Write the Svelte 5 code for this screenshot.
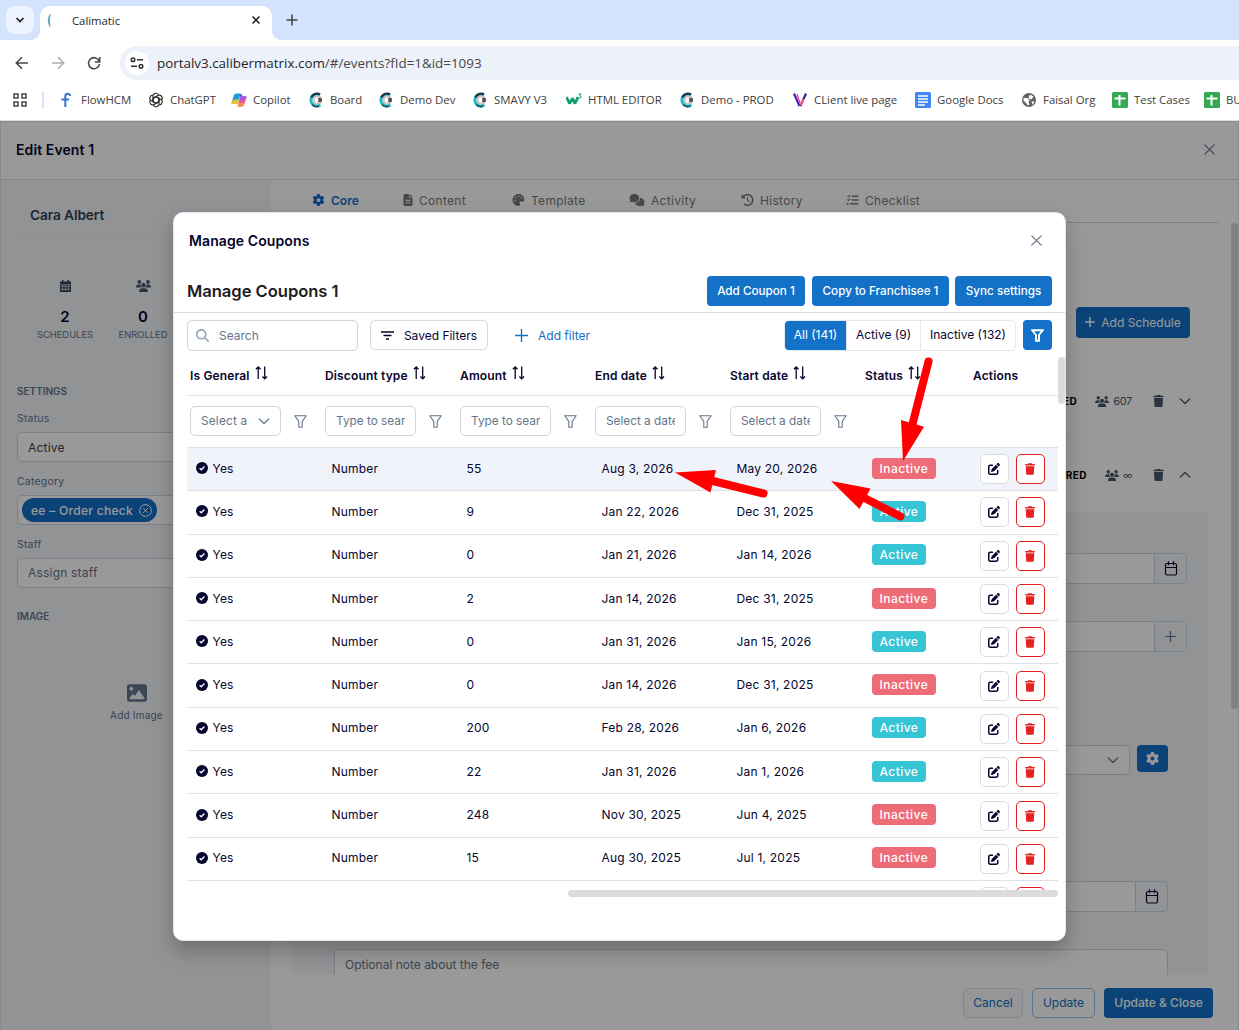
<script lang="ts">
  type Coupon = {
    type: string;
    amount: number;
    end: string;
    start: string;
    active: boolean;
  };

  const icons: Record<string, { box: string; d: string }> = {
    trash: {
      box: "0 0 448 512",
      d: "M135.2 17.7L128 32H32C14.3 32 0 46.3 0 64S14.3 96 32 96H416c17.7 0 32-14.3 32-32s-14.3-32-32-32H320l-7.2-14.3C307.4 6.8 296.3 0 284.2 0H163.8c-12.1 0-23.2 6.8-28.6 17.7zM416 128H32L53.2 467c1.6 25.3 22.6 45 47.9 45H346.9c25.3 0 46.3-19.7 47.9-45L416 128z",
    },
    gear: {
      box: "0 0 512 512",
      d: "M495.9 166.6c3.2 8.7 .5 18.4-6.4 24.6l-43.3 39.4c1.1 8.3 1.7 16.8 1.7 25.4s-.6 17.1-1.7 25.4l43.3 39.4c6.9 6.2 9.6 15.9 6.4 24.6c-4.4 11.9-9.7 23.3-15.8 34.3l-4.7 8.1c-6.6 11-14 21.4-22.1 31.2c-5.9 7.2-15.7 9.6-24.5 6.8l-55.7-17.7c-13.4 10.3-28.2 18.9-44 25.4l-12.5 57.1c-2 9.1-9 16.3-18.2 17.8c-13.8 2.3-28 3.5-42.5 3.5s-28.7-1.2-42.5-3.5c-9.2-1.5-16.2-8.7-18.2-17.8l-12.5-57.1c-15.8-6.5-30.6-15.1-44-25.4L83.1 425.9c-8.8 2.8-18.6 .3-24.5-6.8c-8.1-9.8-15.5-20.2-22.1-31.2l-4.7-8.1c-6.1-11-11.4-22.4-15.8-34.3c-3.2-8.7-.5-18.4 6.4-24.6l43.3-39.4C64.6 273.1 64 264.6 64 256s.6-17.1 1.7-25.4L22.4 191.2c-6.9-6.2-9.6-15.9-6.4-24.6c4.4-11.9 9.7-23.3 15.8-34.3l4.7-8.1c6.6-11 14-21.4 22.1-31.2c5.9-7.2 15.7-9.6 24.5-6.8l55.7 17.7c13.4-10.3 28.2-18.9 44-25.4l12.5-57.1c2-9.1 9-16.3 18.2-17.8C227.3 1.2 241.5 0 256 0s28.7 1.2 42.5 3.5c9.2 1.5 16.2 8.7 18.2 17.8l12.5 57.1c15.8 6.5 30.6 15.1 44 25.4l55.7-17.7c8.8-2.8 18.6-.3 24.5 6.8c8.1 9.8 15.5 20.2 22.1 31.2l4.7 8.1c6.1 11 11.4 22.4 15.8 34.3zM256 336a80 80 0 1 0 0-160 80 80 0 1 0 0 160z",
    },
    edit: {
      box: "0 0 512 512",
      d: "M471.6 21.7c-21.9-21.9-57.3-21.9-79.2 0L362.3 51.7l97.9 97.9 30.1-30.1c21.9-21.9 21.9-57.3 0-79.2L471.6 21.7zm-299.2 220c-6.1 6.1-10.8 13.6-13.5 21.9l-29.6 88.8c-2.9 8.6-.6 18.1 5.8 24.6s15.9 8.7 24.6 5.8l88.8-29.6c8.2-2.7 15.7-7.4 21.9-13.5L437.7 172.3 339.7 74.3 172.4 241.7zM96 64C43 64 0 107 0 160V416c0 53 43 96 96 96H352c53 0 96-43 96-96V320c0-17.7-14.3-32-32-32s-32 14.3-32 32v96c0 17.7-14.3 32-32 32H96c-17.7 0-32-14.3-32-32V160c0-17.7 14.3-32 32-32h96c17.7 0 32-14.3 32-32s-14.3-32-32-32H96z",
    },
    search: {
      box: "0 0 512 512",
      d: "M416 208c0 45.9-14.9 88.3-40 122.7L502.6 457.4c12.5 12.5 12.5 32.8 0 45.3s-32.8 12.5-45.3 0L330.7 376c-34.4 25.2-76.8 40-122.7 40C93.1 416 0 322.9 0 208S93.1 0 208 0S416 93.1 416 208zM208 352a144 144 0 1 0 0-288 144 144 0 1 0 0 288z",
    },
    image: {
      box: "0 0 512 512",
      d: "M0 96C0 60.7 28.7 32 64 32H448c35.3 0 64 28.7 64 64V416c0 35.3-28.7 64-64 64H64c-35.3 0-64-28.7-64-64V96zM323.8 202.5c-4.5-6.6-11.9-10.5-19.8-10.5s-15.4 3.9-19.8 10.5l-87 127.6L170.7 297c-4.6-5.7-11.5-9-18.7-9s-14.2 3.3-18.7 9l-64 80c-5.8 7.2-6.9 17.1-2.9 25.4s12.4 13.6 21.6 13.6h96 32H424c8.9 0 17.1-4.9 21.2-12.8s3.6-17.4-1.4-24.7l-120-176zM112 192a48 48 0 1 0 0-96 48 48 0 1 0 0 96z",
    },
    comments: {
      box: "0 0 640 512",
      d: "M208 352c114.9 0 208-78.8 208-176S322.9 0 208 0S0 78.8 0 176c0 38.6 14.7 74.3 39.6 103.4c-3.5 9.4-8.7 17.7-14.2 24.7c-4.8 6.2-9.7 11-13.3 14.3c-1.8 1.6-3.3 2.9-4.3 3.7c-.5 .4-.9 .7-1.1 .8l-.2 .2C1 327.2-1.4 334.4 .8 340.9S9.1 352 16 352c21.8 0 43.8-5.6 62.1-12.5c9.2-3.5 17.8-7.4 25.2-11.4C134.1 343.3 169.8 352 208 352zM448 176c0 112.3-99.1 196.9-216.5 207C255.8 457.4 336.4 512 432 512c38.2 0 73.9-8.7 104.7-23.9c7.5 4 16 7.9 25.2 11.4c18.3 6.9 40.3 12.5 62.1 12.5c6.9 0 13.1-4.5 15.2-11.1c2.1-6.6-.2-13.8-5.8-17.9l-.2-.2c-.2-.2-.6-.4-1.1-.8c-1-.8-2.5-2-4.3-3.7c-3.6-3.3-8.5-8.1-13.3-14.3c-5.5-7-10.7-15.4-14.2-24.7c24.9-29 39.6-64.7 39.6-103.4c0-92.8-84.9-168.9-192.6-175.5c.4 5.1 .6 10.3 .6 15.5z",
    },
    file: {
      box: "0 0 384 512",
      d: "M64 0C28.7 0 0 28.7 0 64V448c0 35.3 28.7 64 64 64H320c35.3 0 64-28.7 64-64V160H256c-17.7 0-32-14.3-32-32V0H64zM256 0V128H384L256 0zM96 250v44H288v-44zM96 350v44H288v-44z",
    },
    palette: {
      box: "0 0 512 512",
      d: "M512 256c0 .9 0 1.8 0 2.7c-.4 36.5-33.6 61.3-70.1 61.3H344c-26.5 0-48 21.5-48 48c0 3.4 .4 6.7 1 9.9c2.1 10.2 6.5 20 10.8 29.9c6.1 13.8 12.1 27.5 12.1 42c0 31.8-21.6 60.7-53.4 62c-3.5 .1-7 .2-10.6 .2C114.6 512 0 397.4 0 256S114.6 0 256 0S512 114.6 512 256zM128 288a32 32 0 1 0-64 0 32 32 0 1 0 64 0zm0-96a32 32 0 1 0 0-64 32 32 0 1 0 0 64zM288 96a32 32 0 1 0-64 0 32 32 0 1 0 64 0zm96 96a32 32 0 1 0 0-64 32 32 0 1 0 0 64z",
    },
    history: {
      box: "0 0 512 512",
      d: "M75 75L41 41C25.9 25.9 0 36.6 0 57.9V168c0 13.3 10.7 24 24 24H134.1c21.4 0 32.1-25.9 17-41l-30.8-30.8C155 85.5 203 64 256 64c106 0 192 86 192 192s-86 192-192 192c-40.8 0-78.6-12.7-109.7-34.4c-14.5-10.1-34.4-6.6-44.6 7.9s-6.6 34.4 7.9 44.6C151.2 495 201.7 512 256 512c141.4 0 256-114.6 256-256S397.4 0 256 0C185.3 0 121.3 28.7 75 75zm181 53c-13.3 0-24 10.7-24 24V256c0 6.4 2.5 12.5 7 17l72 72c9.4 9.4 24.6 9.4 33.9 0s9.4-24.6 0-33.9l-65-65V152c0-13.3-10.7-24-24-24z",
    },
    checklist: {
      box: "0 0 512 512",
      d: "M20 90l34-30 28 28 62-70 32 30-92 106zM20 250l34-30 28 28 62-70 32 30-92 106zM215 65H512v62H215zM215 225H512v62H215zM155 385H512v62H155zM48 368a48 48 0 1 0 .1 0z",
    },
    users: {
      box: "0 0 640 512",
      d: "M144 0a80 80 0 1 1 0 160A80 80 0 1 1 144 0zM512 0a80 80 0 1 1 0 160A80 80 0 1 1 512 0zM0 298.7C0 239.8 47.8 192 106.7 192h42.7c15.9 0 31 3.5 44.6 9.7c-1.3 7.2-1.9 14.7-1.9 22.3c0 38.2 16.8 72.5 43.3 96c-.2 0-.4 0-.7 0H21.3C9.6 320 0 310.4 0 298.7zM405.3 320c-.2 0-.4 0-.7 0c26.6-23.5 43.3-57.8 43.3-96c0-7.6-.7-15-1.9-22.3c13.6-6.3 28.7-9.7 44.6-9.7h42.7C592.2 192 640 239.8 640 298.7c0 11.8-9.6 21.3-21.3 21.3H405.3zM224 224a96 96 0 1 1 192 0 96 96 0 1 1 -192 0zM128 485.3C128 411.7 187.7 352 261.3 352H378.7C452.3 352 512 411.7 512 485.3c0 14.7-11.9 26.7-26.7 26.7H154.7c-14.7 0-26.7-11.9-26.7-26.7z",
    },
  };

  const bookmarks = [
    { label: "FlowHCM", icon: "flow", width: 89 },
    { label: "ChatGPT", icon: "gpt", width: 83 },
    { label: "Copilot", icon: "copilot", width: 77 },
    { label: "Board", icon: "cali", width: 70 },
    { label: "Demo Dev", icon: "cali", width: 94 },
    { label: "SMAVY V3", icon: "cali", width: 94 },
    { label: "HTML EDITOR", icon: "w3", width: 113 },
    { label: "Demo - PROD", icon: "cali", width: 113 },
    { label: "CLient live page", icon: "v", width: 123 },
    { label: "Google Docs", icon: "docs", width: 106 },
    { label: "Faisal Org", icon: "globe", width: 91 },
    { label: "Test Cases", icon: "sheet", width: 92 },
    { label: "BUGS", icon: "sheet", width: 92 },
  ];

  const tabs = [
    { label: "Core", icon: "gear", width: 91 },
    { label: "Content", icon: "file", width: 109 },
    { label: "Template", icon: "palette", width: 117 },
    { label: "Activity", icon: "comments", width: 112 },
    { label: "History", icon: "history", width: 105 },
    { label: "Checklist", icon: "checklist", width: 90 },
  ];

  const columns = [
    { label: "Is General", placeholder: "Select a" },
    { label: "Discount type", placeholder: "Type to sear" },
    { label: "Amount", placeholder: "Type to sear" },
    { label: "End date", placeholder: "Select a date" },
    { label: "Start date", placeholder: "Select a date" },
    { label: "Status", placeholder: "" },
  ];

  const coupons: Coupon[] = [
    { type: "Number", amount: 55, end: "Aug 3, 2026", start: "May 20, 2026", active: false },
    { type: "Number", amount: 9, end: "Jan 22, 2026", start: "Dec 31, 2025", active: true },
    { type: "Number", amount: 0, end: "Jan 21, 2026", start: "Jan 14, 2026", active: true },
    { type: "Number", amount: 2, end: "Jan 14, 2026", start: "Dec 31, 2025", active: false },
    { type: "Number", amount: 0, end: "Jan 31, 2026", start: "Jan 15, 2026", active: true },
    { type: "Number", amount: 0, end: "Jan 14, 2026", start: "Dec 31, 2025", active: false },
    { type: "Number", amount: 200, end: "Feb 28, 2026", start: "Jan 6, 2026", active: true },
    { type: "Number", amount: 22, end: "Jan 31, 2026", start: "Jan 1, 2026", active: true },
    { type: "Number", amount: 248, end: "Nov 30, 2025", start: "Jun 4, 2025", active: false },
    { type: "Number", amount: 15, end: "Aug 30, 2025", start: "Jul 1, 2025", active: false },
  ];

  let segment = $state("All (141)");
</script>

{#snippet icon(name: string, width: number, height: number)}
  <svg viewBox={icons[name].box} {width} {height} fill="currentColor" fill-rule="evenodd">
    <path d={icons[name].d} />
  </svg>
{/snippet}

{#snippet cross(size: number)}
  <svg width={size} height={size} viewBox="0 0 11 11" fill="none" stroke="currentColor" stroke-width="1.2" stroke-linecap="round">
    <path d="M.8 .8l9.400 9.400M10.200 .8L.8 10.200" />
  </svg>
{/snippet}

{#snippet chevron(up: boolean)}
  <svg width="12" height="12" viewBox="0 0 12 12" fill="none" stroke="currentColor" stroke-width="1.2" stroke-linecap="round" stroke-linejoin="round">
    <path d={up ? "M1.3 8l4.700-4.500 4.700 4.500" : "M1.3 4l4.700 4.500 4.700-4.500"} />
  </svg>
{/snippet}

{#snippet calendar()}
  <svg width="14" height="15" viewBox="0 0 14 15" fill="none" stroke="#05052e" stroke-width="1.2">
    <rect x="1.500" y="2.5" width="11" height="11.5" rx="1.5" />
    <path d="M1.500 6.500h11M4.500 .3v4M9.500 .3v4" />
  </svg>
{/snippet}

{#snippet funnel()}
  <svg class="funnel" width="13" height="13" viewBox="0 0 13 13" fill="none" stroke="#64748b" stroke-width="1.1" stroke-linejoin="round">
    <path d="M.8 .8h11.4L8.2 6.4v5.8H4.8V6.4z" />
  </svg>
{/snippet}

{#snippet favicon(name: string)}
  <svg width="16" height="16" viewBox="0 0 16 16" fill="none">
    {#if name === "flow"}
      <path d="M6.300 15V4.500C6.300 .9 11 1 11 4M2.500 7.500h7.600" stroke="#3b74c4" stroke-width="2" />
    {:else if name === "gpt"}
      <g stroke="#333" stroke-width="1.2">
        {#each [0, 60, 120, 180, 240, 300] as angle}
          <path d="M5 9.700V4.300a3 3 0 0 1 5.600-1.500M5.300 6.200L8 4.700l2.800 1.600" transform="rotate({angle} 8 8)" />
        {/each}
      </g>
    {:else if name === "copilot"}
      <path d="M5 1.500h4.500L7 10.500Q6.400 12 5 12H2Q0 12 .8 9.500L3 3.200Q3.600 1.500 5 1.500z" fill="#1a9be0" />
      <path d="M2 8l-1.2 2Q0 12 2 12h3q1.400 0 2-1.500L8 7z" fill="#e8c22c" />
      <path d="M11 14.500H6.500L9 5.500Q9.600 4 11 4h3q2 0 1.200 2.500L13 12.800q-.6 1.700-2 1.700z" fill="#e8559b" />
      <path d="M9 1.500q2 0 2.500 2.500Q9.600 4 9 5.500L8.300 8 9.500 1.500z" fill="#2b55cf" />
      <path d="M11 4h3q2 0 1.200 2.500l-.6 1.500H8.300L9 5.500Q9.600 4 11 4z" fill="#b05adf" />
      <path d="M6.500 14.500L7.500 11h6l-.5 1.800q-.6 1.700-2 1.700z" fill="#ff8a4c" />
    {:else if name === "cali"}
      <circle cx="8.500" cy="8" r="5.500" fill="#c9c4c8" />
      <path d="M12 3A6 6 0 1 0 12.500 12.800" stroke="#18bccb" stroke-width="2.800" />
      <path d="M12 2.200A6.500 6.500 0 0 0 3.200 5.500" stroke="#24333c" stroke-width="2.200" />
      <path d="M4 12.500a6 6 0 0 0 7 1.500" stroke="#1a5360" stroke-width="1.600" />
      <circle cx="12" cy="8" r="2.200" fill="#5c4a4c" />
      <path d="M7 6l2-1 1.500 3-1.500 3.500L6.500 9z" fill="#fff" />
    {:else if name === "w3"}
      <path d="M.5 5L3.500 11.500 6.500 6.500 9 11.500 12 5" stroke="#13a06f" stroke-width="2.800" stroke-linejoin="bevel" />
      <path d="M12.500 2h2.500l-1.200 1.600q1.400.2 1.400 1.300T12.600 6" stroke="#13a06f" stroke-width="1" />
    {:else if name === "v"}
      <path d="M2 1.500L7.500 14" stroke="#4a1fb8" stroke-width="2.200" />
      <path d="M5 2l3 9" stroke="#e83ea0" stroke-width="1.200" />
      <path d="M14 1.500L8.500 14" stroke="#3a12a0" stroke-width="2" />
      <path d="M8.500 13l3-6" stroke="#ff5b7d" stroke-width="1.800" />
    {:else if name === "docs"}
      <rect width="16" height="16" rx="1.500" fill="#4285f4" />
      <path d="M3 4h10M3 7h10M3 10h10M3 13h7" stroke="#fff" stroke-width="1.400" />
    {:else if name === "globe"}
      <circle cx="8" cy="8" r="7" fill="#5f6368" />
      <path d="M2.500 6l4 0 2 2-1 2 1 2.500-1.500 1-2-2.500-2.500-2.500zM9 2.500l3.500 2-1.500 2.500-2 .5-1.500-2zM10.500 9.500l3 0-2 3.500z" fill="#fff" />
    {:else}
      <rect width="16" height="16" rx="1.500" fill="#34a853" />
      <path d="M2.500 6.500h11M7.500 3v10.500" stroke="#fff" stroke-width="2" />
    {/if}
  </svg>
{/snippet}

<div class="window">
  <div class="tab-strip">
    <div class="tab-search">
      <svg width="10" height="10" viewBox="0 0 10 10" fill="none" stroke="#1f1f1f" stroke-width="1.700"><path d="M1.500 3l3.500 3.500L8.500 3" /></svg>
    </div>
    <div class="browser-tab">
      <svg width="4" height="13" viewBox="0 0 4 13"><path d="M3 .5Q-.5 6.500 3 12.500 1.800 6.500 3 .5z" fill="#7fb3c4" stroke="#4b9ab3" stroke-width=".8" /></svg>
      <span>Calimatic</span>
      <svg class="tab-close" width="8" height="8" viewBox="0 0 8 8" stroke="#1f1f1f" stroke-width="1.500"><path d="M.5 .5l7 7M7.500 .5l-7 7" /></svg>
    </div>
    <svg class="new-tab" width="12" height="12" viewBox="0 0 12 12" stroke="#474747" stroke-width="1.600"><path d="M6 .5v11M.5 6h11" /></svg>
  </div>

  <div class="address-row">
    <svg width="14" height="14" viewBox="0 0 14 14" fill="none" stroke="#474747" stroke-width="1.600"><path d="M13 7H1.500M7 1.300L1.300 7 7 12.700" /></svg>
    <svg width="14" height="14" viewBox="0 0 14 14" fill="none" stroke="#adadad" stroke-width="1.600"><path d="M1 7h11.500M7 1.300L12.700 7 7 12.700" /></svg>
    <svg width="14" height="14" viewBox="0 0 14 14" fill="none" stroke="#474747" stroke-width="1.600"><path d="M12.300 5.500A5.500 5.500 0 1 0 12.500 8M12.700 1v5H7.800" /></svg>
    <div class="address">
      <div class="site-info">
        <svg width="14" height="12" viewBox="0 0 14 12" fill="none" stroke="#303030" stroke-width="1.500"><circle cx="3" cy="2.800" r="1.800" /><path d="M7 2.800h6M1 9.200h6" /><circle cx="11" cy="9.200" r="1.800" /></svg>
      </div>
      <span class="url">portalv3.calibermatrix.com<i>/#/events?fId=1&amp;id=1093</i></span>
    </div>
  </div>

  <div class="bookmarks">
    <svg class="apps" width="14" height="14" viewBox="0 0 14 14" fill="none" stroke="#474747" stroke-width="1.500"><path d="M1 1h4v4H1zM9 1h4v4H9zM1 9h4v4H1zM9 9h4v4H9z" /></svg>
    <span class="bar"></span>
    {#each bookmarks as b}
      <div class="bookmark" style="width: {b.width}px">
        {@render favicon(b.icon)}
        <span>{b.label}</span>
      </div>
    {/each}
  </div>

  <div class="app">
    <header class="page-header">
      <h1>Edit Event 1</h1>
      <span class="close">{@render cross(11)}</span>
    </header>

    <div class="page-body">
      <aside class="sidebar">
        <div class="person">Cara Albert</div>
        <div class="stats">
          <div class="stat">
            <svg width="11" height="12" viewBox="0 0 11 12" fill="#334155"><path d="M2 0h1.500v1.500h4V0H9v1.500h2V4H0V1.500h2z" /><path fill-rule="evenodd" d="M0 4.500h11V12H0zM1.500 5.500v1.700h2V5.500zM4.500 5.500v1.700h2V5.500zM7.500 5.500v1.700h2V5.500zM1.500 8.500v1.700h2V8.500zM4.500 8.500v1.700h2V8.500zM7.500 8.500v1.700h2V8.500z" /></svg>
            <b>2</b>
            <small>SCHEDULES</small>
          </div>
          <div class="stat">
            {@render icon("users", 15, 12)}
            <b>0</b>
            <small>ENROLLED</small>
          </div>
        </div>
        <h2>SETTINGS</h2>
        <div class="field">
          <span class="label">Status</span>
          <div class="control">Active</div>
        </div>
        <div class="field">
          <span class="label">Category</span>
          <div class="control tags">
            <span class="tag">
              ee – Order check
              <svg width="13" height="13" viewBox="0 0 13 13" fill="none" stroke="#fff"><circle cx="6.500" cy="6.500" r="5.900" /><path d="M4.200 4.200l4.600 4.600M8.800 4.200L4.200 8.800" /></svg>
            </span>
          </div>
        </div>
        <div class="field">
          <span class="label">Staff</span>
          <div class="control muted">Assign staff</div>
        </div>
        <h2>IMAGE</h2>
        <div class="add-image">
          {@render icon("image", 20, 20)}
          <span>Add Image</span>
        </div>
      </aside>

      <main>
        <nav>
          {#each tabs as tab, i}
            <div class="tab" class:current={i === 0} style="width: {tab.width}px">
              {@render icon(tab.icon, tab.icon === "comments" ? 16 : tab.icon === "file" ? 10 : 13, 12)}
              <span>{tab.label}</span>
            </div>
          {/each}
        </nav>
        <div class="content">
          <div class="content-top">
            <button class="primary add-schedule"><svg width="10" height="10" viewBox="0 0 10 10" stroke="#fff" stroke-width="1.500"><path d="M5 0v10M0 5h10" /></svg>Add Schedule</button>
          </div>
          <div class="schedule">
            <b>CONFIRMED</b>
            {@render icon("users", 14, 11)}
            <span class="count">607</span>
            {@render icon("trash", 11, 12)}
            {@render chevron(false)}
          </div>
          <div class="schedule-card">
            <div class="schedule open">
              <b>REGISTERED</b>
              {@render icon("users", 14, 11)}
              <span class="count small">∞</span>
              {@render icon("trash", 11, 12)}
              {@render chevron(true)}
            </div>
            <div class="form">
              <div class="group first"><span></span><i>{@render calendar()}</i></div>
              <div class="group second"><span></span><i><svg width="11" height="11" viewBox="0 0 11 11" stroke="#64748b" stroke-width="1.200"><path d="M5.500 0v11M0 5.500h11" /></svg></i></div>
              <div class="select-row">
                <div class="select">{@render chevron(false)}</div>
                <button class="primary square">{@render icon("gear", 13, 13)}</button>
              </div>
              <div class="group third"><span></span><i>{@render calendar()}</i></div>
              <div class="note">Optional note about the fee</div>
            </div>
          </div>
          <span class="page-scroll"></span>
        </div>
        <footer>
          <button class="soft">Cancel</button>
          <button class="outline">Update</button>
          <button class="primary">Update &amp; Close</button>
        </footer>
      </main>
    </div>

    <div class="backdrop">
      <div class="modal">
        <div class="modal-header">
          <h2>Manage Coupons</h2>
          <span class="close">{@render cross(11)}</span>
        </div>
        <div class="title-row">
          <h3>Manage Coupons 1</h3>
          <button class="primary b1">Add Coupon 1</button>
          <button class="primary b2">Copy to Franchisee 1</button>
          <button class="primary b3">Sync settings</button>
        </div>
        <div class="toolbar">
          <div class="search">{@render icon("search", 13, 13)}<span>Search</span></div>
          <button class="saved">
            <svg width="13" height="9" viewBox="0 0 13 9" stroke="#05052e" stroke-width="1.500"><path d="M0 1h13M2.500 4.500h8M5 8h3" /></svg>
            Saved Filters
          </button>
          <button class="add-filter">
            <svg width="13" height="13" viewBox="0 0 13 13" stroke="#1371c8" stroke-width="1.400"><path d="M6.500 0v13M0 6.500h13" /></svg>
            Add filter
          </button>
          <div class="segments">
            {#each ["All (141)", "Active (9)", "Inactive (132)"] as s}
              <button class:on={segment === s} onclick={() => (segment = s)}>{s}</button>
            {/each}
          </div>
          <button class="primary filter">
            <svg width="13" height="13" viewBox="0 0 13 13" fill="none" stroke="#fff" stroke-width="1.900"><path d="M1.300 1.300h10.400L8 6v5.800H5V6z" /></svg>
          </button>
        </div>

        <div class="table-area">
          <div class="table">
            <div class="row head">
              {#each columns as c}
                <div class="cell">
                  {c.label}
                  <svg width="13" height="14" viewBox="0 0 13 14" fill="none" stroke="#05052e" stroke-width="1.300"><path d="M3.200 13V1M.9 3.300L3.200 1l2.300 2.300M9.700 .5v12.300M7.400 10.500l2.300 2.300 2.300-2.300" /></svg>
                </div>
              {/each}
              <div class="cell">Actions</div>
            </div>
            <div class="row filters">
              {#each columns.slice(0, 5) as c, i}
                <div class="cell">
                  <div class="filter-box" class:pick={i === 0}>
                    <span>{c.placeholder}</span>
                    {#if i === 0}{@render chevron(false)}{/if}
                  </div>
                  {@render funnel()}
                </div>
              {/each}
            </div>
            {#each coupons as coupon, i}
              <div class="row data" class:selected={i === 0}>
                <div class="cell yes">
                  <svg width="12" height="12" viewBox="0 0 12 12" fill="none"><circle cx="6" cy="6" r="6" fill="#05052e" /><path d="M3.600 6.200l1.700 1.600 3.100-3.300" stroke="#fff" stroke-width="1.300" /></svg>
                  Yes
                </div>
                <div class="cell">{coupon.type}</div>
                <div class="cell">{coupon.amount}</div>
                <div class="cell">{coupon.end}</div>
                <div class="cell">{coupon.start}</div>
                <div class="cell">
                  <span class="badge" class:active={coupon.active}>{coupon.active ? "Active" : "Inactive"}</span>
                </div>
                <div class="cell actions">
                  <button class="edit">{@render icon("edit", 12, 12)}</button>
                  <button class="delete">{@render icon("trash", 10, 12)}</button>
                </div>
              </div>
            {/each}
            <div class="row data">
              <div class="cell spacer"></div>
              <div class="cell actions">
                <button class="edit"></button>
                <button class="delete"></button>
              </div>
            </div>
          </div>
          <span class="v-scroll"></span>
          <span class="h-scroll"></span>
        </div>
      </div>
    </div>
  </div>

  <!-- pointers drawn over the table -->
  <svg class="pointers" width="1239" height="1030" viewBox="0 0 1239 1030" fill="red" stroke="red" stroke-linecap="round">
    <path d="M928.500 361.500L912.500 424M763.500 493.500L713 481M900.500 516.500L864.500 498" stroke-width="8" />
    <path d="M903 461L901 420l23 6.700zM675 472.500l41-2.500-5.500 22.500zM831 481l39.500 7.500-11 20.500z" stroke="none" />
  </svg>
</div>

<style>
  :global(body) {
    margin: 0;
    overflow: hidden;
  }

  .window {
    position: relative;
    width: 1239px;
    height: 1030px;
    overflow: hidden;
    display: flex;
    flex-direction: column;
    background: #fff;
    color: #05052e;
    font-family: Inter, "Open Sans", sans-serif;
    font-size: 12px;
  }

  * {
    box-sizing: border-box;
  }

  svg {
    flex: none;
    display: block;
  }

  h1,
  h2,
  h3 {
    margin: 0;
    font-weight: 600;
  }

  button {
    font: inherit;
    padding: 0;
    border: 0;
    background: none;
    color: inherit;
    display: flex;
    align-items: center;
    justify-content: center;
    white-space: nowrap;
  }

  .tab-strip {
    height: 40px;
    background: #d3e3fd;
    display: flex;
    align-items: center;
    flex: none;
    font-family: "Open Sans", sans-serif;
  }

  .tab-search {
    width: 28px;
    height: 28px;
    margin: 0 6px;
    border-radius: 9px;
    background: #ecf3fe;
    display: flex;
    align-items: center;
    justify-content: center;
  }

  .browser-tab {
    position: relative;
    width: 232px;
    height: 34px;
    margin-top: 6px;
    padding: 0 12px 6px 7px;
    border-radius: 10px 10px 0 0;
    background: #fff;
    display: flex;
    align-items: center;
    color: #1f1f1f;
  }

  .browser-tab::before,
  .browser-tab::after {
    content: "";
    position: absolute;
    bottom: 0;
    width: 10px;
    height: 10px;
    background: radial-gradient(circle at 0 0, transparent 10px, #fff 10.5px);
  }

  .browser-tab::before {
    left: -10px;
  }

  .browser-tab::after {
    right: -10px;
    background: radial-gradient(circle at 100% 0, transparent 10px, #fff 10.5px);
  }

  .browser-tab span {
    margin-left: 21px;
    font-size: 11.3px;
  }

  .tab-close {
    margin-left: auto;
  }

  .new-tab {
    margin-left: 14px;
  }

  .address-row {
    height: 46px;
    flex: none;
    display: flex;
    align-items: center;
    gap: 22px;
    padding-left: 15px;
  }

  .address {
    flex: 1;
    height: 34px;
    margin-left: -3px;
    border-radius: 17px 0 0 17px;
    background: #edf1fa;
    display: flex;
    align-items: center;
    padding-left: 5px;
  }

  .site-info {
    width: 24px;
    height: 24px;
    border-radius: 50%;
    background: #fff;
    display: flex;
    align-items: center;
    justify-content: center;
  }

  .url {
    margin-left: 8px;
    font-family: "Open Sans", sans-serif;
    font-size: 13.4px;
    color: #1f1f1f;
  }

  .url i {
    font-style: normal;
    color: #474747;
  }

  .bookmarks {
    height: 35px;
    flex: none;
    display: flex;
    align-items: center;
    border-bottom: 1px solid #dcdddd;
    padding: 0 0 6px 13px;
    overflow: hidden;
    font-family: "Open Sans", sans-serif;
    font-size: 11.4px;
    color: #404040;
  }

  .bar {
    flex: none;
    width: 2px;
    height: 16px;
    margin: 0 15px;
    background: #d3e3fd;
  }

  .bookmark {
    flex: none;
    display: flex;
    align-items: center;
    gap: 6px;
    white-space: nowrap;
  }

  .bookmark span {
    padding-bottom: 2px;
  }

  .app {
    position: relative;
    flex: 1;
    display: flex;
    flex-direction: column;
    min-height: 0;
    border: 1px solid #e2e8f0;
    border-bottom: 0;
  }

  .page-header {
    height: 58px;
    flex: none;
    display: flex;
    align-items: center;
    justify-content: space-between;
    padding: 0 23px 2px 15px;
    border-bottom: 1px solid #dbdfe6;
  }

  .page-header h1 {
    font-size: 14px;
    letter-spacing: 0.1px;
  }

  .close {
    color: #64748b;
  }

  .page-body {
    flex: 1;
    min-height: 0;
    display: flex;
  }

  .sidebar {
    width: 270px;
    flex: none;
    padding: 16px 15px 16px 16px;
    background: #f3f5f8;
    color: #64748b;
  }

  .person {
    height: 39px;
    padding: 0 0 2px 13px;
    display: flex;
    align-items: center;
    border-radius: 6px;
    box-shadow: 0 1px 1px rgba(0, 0, 0, 0.03);
    color: #334155;
    font-size: 13.7px;
    font-weight: 600;
    letter-spacing: -0.1px;
  }

  .stats {
    display: flex;
    margin: 45px 0 0 9px;
  }

  .stat {
    width: 78px;
    display: flex;
    flex-direction: column;
    align-items: center;
    color: #475569;
  }

  .stat b {
    margin-top: 15px;
    color: #05052e;
    font-size: 15px;
    line-height: 20px;
    font-weight: 600;
  }

  .stat small {
    margin-top: 2px;
    font-size: 9.4px;
    line-height: 12px;
    color: #64748b;
  }

  .sidebar h2 {
    margin: 44px 0 15px;
    font-size: 10px;
    line-height: 12px;
  }

  .field {
    margin-bottom: 13px;
  }

  .field .label {
    display: block;
    font-size: 10.5px;
    line-height: 14px;
    margin-bottom: 6px;
    letter-spacing: 0.2px;
  }

  .control {
    height: 30px;
    padding: 0 10px;
    border: 1px solid #cbd5e1;
    border-radius: 5px;
    background: #fff;
    display: flex;
    align-items: center;
    color: #334155;
    letter-spacing: 0.2px;
  }

  .control.muted {
    padding-bottom: 2px;
    color: #64748b;
  }

  .control.tags {
    padding: 0 4px;
  }

  .tag {
    height: 24px;
    padding: 0 5px 0 9px;
    border-radius: 12px;
    background: #1371c8;
    color: #fff;
    font-weight: 500;
    letter-spacing: 0.3px;
    display: flex;
    align-items: center;
    gap: 6px;
  }

  .field + h2 {
    margin: 22px 0 0;
  }

  .add-image {
    display: flex;
    flex-direction: column;
    align-items: center;
    margin-top: 61px;
    font-size: 10px;
    gap: 6px;
    letter-spacing: 0.2px;
  }

  main {
    flex: 1;
    display: flex;
    flex-direction: column;
    min-width: 0;
  }

  nav {
    height: 43px;
    flex: none;
    margin: 0 19px 0 23px;
    padding: 0 0 2px 18px;
    display: flex;
    align-items: center;
    border-bottom: 1px solid #d3d6db;
    color: #787878;
  }

  .tab {
    display: flex;
    align-items: center;
    gap: 6px;
    letter-spacing: 0.3px;
  }

  .tab.current {
    color: #1371c8;
    font-weight: 600;
    letter-spacing: 0;
  }

  .content {
    position: relative;
    flex: 1;
    min-height: 0;
    overflow: hidden;
    padding: 0 31px 0 23px;
  }

  .content-top {
    display: flex;
    justify-content: flex-end;
    padding: 84px 17px 0 0;
  }

  .primary {
    border-radius: 4px;
    background: #1371c8;
    color: #fff;
  }

  .add-schedule {
    width: 114px;
    height: 31px;
    padding-bottom: 1px;
    gap: 6px;
  }

  .schedule {
    height: 50px;
    margin: 38px 16px 0 0;
    display: flex;
    align-items: center;
    justify-content: flex-end;
    color: #475569;
  }

  .schedule b {
    margin-right: 18px;
    color: #000;
    font-size: 10px;
    letter-spacing: 0.4px;
  }

  .schedule .count {
    margin: 0 21px 0 4px;
    font-size: 11px;
    letter-spacing: -0.3px;
  }

  .schedule .count.small {
    font-size: 10px;
  }

  .schedule :global(svg:last-child) {
    margin-left: 15px;
  }

  .schedule-card {
    margin-top: 12px;
    border-radius: 8px;
    box-shadow: 0 0 6px rgba(0, 0, 0, 0.05);
  }

  .schedule.open {
    height: 74px;
    margin-top: 0;
  }

  .form {
    height: 520px;
    padding: 41px 39px 0 40px;
    background: #f3f5f8;
  }

  .group {
    height: 31px;
    display: flex;
    border: 1px solid #cbd5e1;
    border-radius: 5px;
    background: #fff;
    overflow: hidden;
  }

  .group span {
    flex: 1;
  }

  .group i {
    width: 32px;
    border-left: 1px solid #cbd5e1;
    background: #f3f5f8;
    display: flex;
    align-items: center;
    justify-content: center;
  }

  .first,
  .second {
    margin-right: -19px;
  }

  .second {
    margin-top: 37px;
  }

  .select-row {
    display: flex;
    gap: 7px;
    margin: 93px 0 106px;
  }

  .select {
    flex: 1;
    height: 30px;
    border: 1px solid #cbd5e1;
    border-radius: 5px;
    background: #fff;
    color: #64748b;
    display: flex;
    align-items: center;
    justify-content: flex-end;
    padding-right: 10px;
  }

  .square {
    width: 31px;
    height: 27px;
  }

  .note {
    height: 60px;
    margin-top: 37px;
    padding: 7px 10px;
    border: 1px solid #cbd5e1;
    border-radius: 5px;
    background: #fff;
    color: #64748b;
    font-size: 12px;
  }

  .page-scroll {
    position: absolute;
    right: 0;
    top: 0;
    width: 7px;
    height: 486px;
    border-radius: 4px;
    background: #d9d9d9;
  }

  footer {
    height: 55px;
    flex: none;
    display: flex;
    align-items: center;
    justify-content: flex-end;
    gap: 9px;
    padding-right: 25px;
  }

  footer button {
    height: 30px;
    border-radius: 5px;
  }

  .soft {
    width: 60px;
    border: 1px solid #dbe1ea;
    background: #f8fafc;
    color: #1371c8;
  }

  .outline {
    width: 63px;
    border: 1px solid #99bdf5;
    color: #1371c8;
  }

  footer .primary {
    width: 109px;
    font-weight: 500;
  }

  .backdrop {
    position: absolute;
    inset: -1px;
    bottom: 0;
    background: rgba(0, 0, 0, 0.4);
  }

  .modal {
    width: 893px;
    height: 729px;
    margin: 91px 0 0 173px;
    border: 1px solid #dfe7f0;
    border-radius: 10px;
    background: #fff;
    box-shadow: 0 10px 20px rgba(0, 0, 0, 0.25);
    overflow: hidden;
  }

  .modal-header {
    height: 57px;
    padding: 0 23px 2px 15px;
    display: flex;
    align-items: center;
    justify-content: space-between;
  }

  .modal-header h2 {
    font-size: 14px;
    letter-spacing: 0.1px;
  }

  .title-row {
    height: 43px;
    padding: 6px 13px 6px;
    display: flex;
    align-items: center;
    border-bottom: 1px solid #d9dbde;
  }

  .title-row h3 {
    flex: 1;
    padding-bottom: 1px;
    font-size: 16.6px;
    font-weight: 600;
    letter-spacing: -0.05px;
    color: #1d1d1f;
  }

  .title-row button {
    height: 30px;
    font-weight: 500;
    font-size: 11.7px;
  }

  .b1 {
    width: 98px;
  }

  .b2 {
    width: 137px;
    margin: 0 6px 0 7px;
  }

  .b3 {
    width: 97px;
  }

  .toolbar {
    height: 44px;
    padding: 0 13px;
    display: flex;
    align-items: center;
  }

  .search {
    width: 171px;
    height: 31px;
    padding-left: 8px;
    border: 1px solid #cbd5e1;
    border-radius: 5px;
    display: flex;
    align-items: center;
    gap: 10px;
    color: #94a3b8;
  }

  .search span {
    color: #64748b;
  }

  .saved {
    width: 118px;
    height: 30px;
    margin-left: 12px;
    border: 1px solid #d7dade;
    border-radius: 5px;
    gap: 10px;
  }

  .add-filter {
    margin-left: 27px;
    gap: 10px;
    color: #1371c8;
  }

  .segments {
    display: flex;
    margin-left: auto;
    height: 31px;
    border: 1px solid #e2e8f0;
    border-radius: 5px;
    overflow: hidden;
  }

  .segments button {
    width: 74px;
    padding-bottom: 1px;
    border-right: 1px solid #e2e8f0;
  }

  .segments button:first-child {
    width: 62px;
  }

  .segments button:last-child {
    width: 94px;
    border: 0;
  }

  .segments .on {
    background: #1371c8;
    color: #fff;
  }

  .filter {
    width: 29px;
    height: 30px;
    margin-left: 7px;
  }

  .table-area {
    position: relative;
    height: 540px;
    margin-left: 13px;
    overflow: hidden;
  }

  .table {
    width: 871px;
  }

  .row {
    display: grid;
    grid-template-columns: repeat(5, 135px) 108px 88px;
    border-bottom: 1px solid #dfe1e4;
  }

  .cell {
    display: flex;
    align-items: center;
    padding-left: 3px;
    white-space: nowrap;
  }

  .head {
    height: 39px;
    font-weight: 600;
    font-size: 12px;
    letter-spacing: 0.15px;
  }

  .head .cell {
    gap: 5px;
    padding-bottom: 2px;
  }

  .head .cell svg {
    margin-top: -5px;
  }

  .filters {
    height: 52px;
  }

  .filters .cell {
    padding-bottom: 1px;
  }

  .filter-box {
    width: 91px;
    height: 30px;
    padding: 0 10px;
    border: 1px solid #cbd5e1;
    border-radius: 5px;
    display: flex;
    align-items: center;
    justify-content: space-between;
    color: #64748b;
  }

  .filter-box span {
    width: 70px;
    overflow: hidden;
    font-size: 11.8px;
  }

  .filter-box.pick span {
    width: auto;
    letter-spacing: 0.2px;
  }

  .funnel {
    margin-left: 13px;
  }

  .data {
    height: 43.3px;
    letter-spacing: 0.2px;
  }

  .data .cell {
    padding: 0 0 2px 9.5px;
  }

  .data .yes {
    padding-left: 9px;
  }

  .data.selected {
    background: #f0f3f9;
  }

  .yes {
    gap: 4.5px;
  }

  .badge {
    height: 21px;
    padding: 0 8px;
    border-radius: 4px;
    background: #ee6c77;
    color: #fff;
    font-weight: 500;
    letter-spacing: 0.45px;
    display: flex;
    align-items: center;
  }

  .badge.active {
    background: #36c5d5;
  }

  .data .actions {
    gap: 7px;
    padding-bottom: 0;
  }

  .actions button {
    width: 29px;
    height: 30px;
    border-radius: 5px;
    background: #fff;
  }

  .edit {
    border: 1px solid #dadce0;
  }

  .delete {
    border: 1px solid #e02020;
    color: #e52222;
  }

  .spacer {
    grid-column: span 6;
  }

  .v-scroll,
  .h-scroll {
    position: absolute;
    border-radius: 4px;
    background: #dbdbdb;
  }

  .v-scroll {
    right: 0;
    top: 0;
    width: 7px;
    height: 47px;
  }

  .h-scroll {
    left: 381px;
    bottom: 0;
    width: 490px;
    height: 7px;
  }

  .pointers {
    position: absolute;
    inset: 0;
    pointer-events: none;
  }
</style>
